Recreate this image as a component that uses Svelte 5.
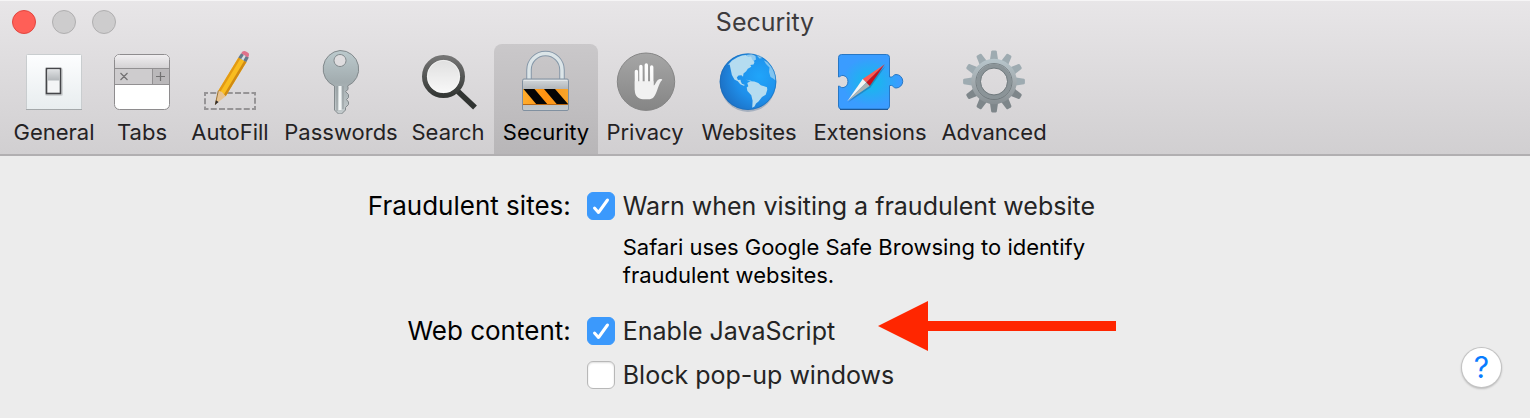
<script lang="ts">
  // Safari preferences window, Security pane.
  const panes = ['General', 'Tabs', 'AutoFill', 'Passwords', 'Search', 'Security', 'Privacy', 'Websites', 'Extensions', 'Advanced'];
  const teeth = Array.from({ length: 12 }, (_, i) => i * 30);

  let active = $state('Security');
  let warnFraud = $state(true);
  let enableJs = $state(true);
  let blockPopups = $state(false);
</script>

{#snippet icon(name: string)}
  <svg class="icon" viewBox="0 0 70 66" aria-hidden="true">
    {#if name === 'General'}
      <rect x="7.5" y="6.5" width="55" height="55" rx="1" fill="url(#plate)" stroke="#c9cdcf" />
      <path d="M7 61.5h56" stroke="#a4a8aa" />
      <rect x="26" y="20" width="18" height="28" rx="2" fill="#000" opacity=".12" />
      <rect x="27.5" y="20.5" width="14" height="25" fill="#f4f5f6" stroke="#45464a" stroke-width="1.6" />
      <rect x="28.5" y="21.5" width="12" height="11" fill="url(#rocker)" />
    {:else if name === 'Tabs'}
      <rect x="7.5" y="6.5" width="55" height="55" rx="5" fill="#fff" stroke="#8e8c8e" />
      <path d="M8 20V11.500q0-4.500 4.500-4.500h45q4.500 0 4.500 4.500V20z" fill="url(#tabhead)" />
      <path d="M8 20h54v17H8z" fill="#ceccce" />
      <path d="M45 20h17v17H45z" fill="#bab8ba" />
      <path d="M8 20.500h54M8 36.500h54M45.500 20.500v16" stroke="#929092" />
      <path d="M13.500 25l7 7M20.500 25l-7 7M49 28.500h9M53.500 24v9" stroke="#727172" stroke-width="1.200" />
    {:else if name === 'AutoFill'}
      <rect x="10" y="45" width="50" height="16" fill="none" stroke="#969496" stroke-width="2" stroke-dasharray="6 2.250" stroke-dashoffset="3" />
      <path d="M23.300 42.700L43.500 9.500L51.500 14L30.700 48.200z" fill="#f9bd20" />
      <path d="M23.300 42.700L43.500 9.500L45.500 10.600L25 44.500z" fill="#e39a13" />
      <path d="M28.700 47L49.300 12.700L51.500 14L30.700 48.200z" fill="#d08a12" />
      <path d="M23.300 42.700L20.300 56.500L30.700 48.200L27 44z" fill="#e7c391" />
      <path d="M23.300 42.700L20.300 56.500" stroke="#9b7335" />
      <path d="M20.900 52.200L20 57L23.600 54z" fill="#2f2b2b" />
      <path d="M43.300 9.500l2.900-4.300 7.600 4.300-2.400 4.600z" fill="#65798b" />
      <path d="M46.200 11l2.900-4.500 2 1.100-2.700 4.600z" fill="#d6dfe3" />
      <path d="M46.200 5.200l1.300-1.700q1.700-1.100 4.500.5t2 3.300l-.9 2.200z" fill="#df718b" />
    {:else if name === 'Passwords'}
      <path fill-rule="evenodd" fill="url(#steel)" stroke="#82898c" d="M34 2.500a18.500 18.500 0 0 1 7.500 35.500l.5 1v2.500l-2.500 2 3 3v3l-2 2 2 2.500v2.500l-3 3v2.500l-4 4h-3l-4-4V38A18.500 18.500 0 0 1 34 2.500zM34 6.500a6 6 0 1 0 .010 0z" />
      <path d="M32.500 38h3v24h-3z" fill="#f3f6f6" />
      <path d="M31 38v25M37 38v23" stroke="#92999c" />
    {:else if name === 'Search'}
      <path d="M44 42.500l18 17" stroke="#303331" stroke-width="5.500" />
      <circle cx="30.500" cy="28.500" r="19" fill="url(#lens)" stroke="url(#ring)" stroke-width="5" />
      <circle cx="30.500" cy="28.500" r="16.200" fill="none" stroke="#fff" opacity=".5" />
    {:else if name === 'Security'}
      <path d="M18 31V22a16.500 16.500 0 0 1 33 0V31" fill="none" stroke="#8597a8" stroke-width="5.500" />
      <path d="M18 31V22a16.500 16.500 0 0 1 33 0V31" fill="none" stroke="#dce5e8" stroke-width="3.500" />
      <rect x="11.500" y="31" width="46" height="31.500" rx="1.500" fill="url(#lock)" stroke="#8090a0" />
      <path d="M12 41h45v16H12z" fill="url(#orange)" />
      <path d="M12.500 41h11L37 57H26zM33 41h11l13 15v1H46.500z" fill="#050505" />
      <path d="M12 56.500h45" stroke="#b96914" />
      <path d="M13 32.500h43" stroke="#e3e7e9" />
    {:else if name === 'Privacy'}
      <circle cx="36" cy="33.700" r="28.700" fill="url(#disc)" stroke="#858585" />
      <g fill="none" stroke="url(#hand)" stroke-linecap="round">
        <path d="M26.400 23.500L26.500 42M30.900 18.500L31 38M36.300 17L36.400 38M41.700 19L41.800 38" stroke-width="3.400" />
      </g>
      <path d="M24.800 33.200h18.700v4.300c2.300-.6 2.500-5.500 5.800-6.300 1.500-.4 3.200.2 2.900.7-3.600 2.400-4.900 13.200-8.600 17.300-1.300 1.500-3.200 2-5.200 2h-5.500c-4.700 0-8.100-3.700-8.100-9z" fill="#f1f1f1" />
    {:else if name === 'Websites'}
      <ellipse cx="34" cy="36" rx="27.500" ry="28" fill="#315a86" opacity=".3" />
      <circle cx="34" cy="33.700" r="28.300" fill="url(#ocean)" />
      <g fill="#b5dcf0">
        <path d="M14 17l4-4.500 5.500-3.300 4.500-1.700 4-.5 2 2 3-.5 1 2.500 2.500 3-1 2.500-3.200.5 1 1.700-3.500 2-1.600 2.500-2.700 2.300-.5 3.200-1.500-1.500-3 .2-1.700 2 1.200 2.600 2.500-.3.4 2 1 2 3.100 1.200-1.200.8-3.500-1.500-2.500-3-3.400-1.800-2.500-4.300-1.200-5.600-1-5z" />
        <path d="M32.500 7l5-1 4 2 .5 3.500-2.500 1.500-2.500-2.500-3.500-.5zM42 6.500l5 1.500 1.500 2-3 .5z" opacity=".75" />
        <path d="M32 31.800l4 .5 2.500 1.300-3-.5z" opacity=".7" />
        <path d="M34.300 38.300l-1-3.300 3-1.700 4 .3 4 1.300 2.500 2.300 6.200 2 .3 2.500-1.600 5-3.700 2.200-3.500 4.500-2.500 2-1.500 3.100-2.300 1.300.4-7-1.300-5.500-3.900-4.200-.7-3.600z" />
        <path d="M50 12.500l3.500 1.500 5.500 7 2.200 6 .4 5.500-2.500-2-2.600-1.500-1.500-5 .5-4.500-3.500-3.500z" opacity=".65" />
      </g>
      <circle cx="34" cy="33.700" r="27.900" fill="none" stroke="#1766ad" opacity=".5" />
    {:else if name === 'Extensions'}
      <path d="M6.500 6.500h45a3 3 0 0 1 3 3V29h2c1.500 0 2-2.500 4.500-2.500a6.500 6.500 0 0 1 0 13.500c-2.500 0-3-2.500-4.500-2.500h-2V58a3 3 0 0 1-3 3h-45a3 3 0 0 1-3-3V38c1.500 0 2 1.700 4.500 1.700a6.300 6.300 0 0 0 0-12.300C5.500 27.400 5 29 3.500 29V9.500a3 3 0 0 1 3-3z" fill="url(#puzzle)" stroke="#2877c4" />
      <path d="M5 61.500h48" stroke="#1e5895" />
      <path d="M50.500 18L35.500 39.500 13 54.500z" fill="#174c75" opacity=".35" />
      <path d="M49.700 16.300L27.700 31l3.500 3.500z" fill="#ff5a52" />
      <path d="M49.700 16.300L31.200 34.500l3.500 3.500z" fill="#c9111a" />
      <path d="M12.300 53.300L27.700 31l3.500 3.500z" fill="#f5f5f4" />
      <path d="M12.300 53.300L31.200 34.500l3.500 3.500z" fill="#aeb3b3" />
    {:else}
      {#each teeth as angle (angle)}
        <path d="M30.800 13L32.200 3.500q.3-.9 1.300-.9h3q1 0 1.300.9L39.200 13z" fill={angle > 90 && angle < 270 ? '#7e868a' : '#9eabb1'} transform="rotate({angle} 35 33.500)" />
      {/each}
      <circle cx="35" cy="33.500" r="18" fill="none" stroke="url(#gear)" stroke-width="9.500" />
      <circle cx="35" cy="33.500" r="18" fill="none" stroke="#6c7478" opacity=".8" />
      <circle cx="35" cy="33.500" r="15.500" fill="none" stroke="#8b9498" stroke-width="4" />
      <circle cx="35" cy="33.500" r="13.500" fill="none" stroke="#717a7e" />
    {/if}
  </svg>
{/snippet}

{#snippet option(label: string, checked: boolean, toggle: () => void)}
  <label class="option">
    <span class="box">
      <input type="checkbox" {checked} onchange={toggle} />
      <svg viewBox="0 0 28 28" aria-hidden="true"><path d="M7.500 16l4 4.500L20.500 8" /></svg>
    </span>
    {label}
  </label>
{/snippet}

<!-- gradients shared by the toolbar icons -->
<svg class="defs" aria-hidden="true">
  <defs>
    <linearGradient id="plate" x2="0" y2="1"><stop stop-color="#fdfeff" /><stop offset="1" stop-color="#e8edef" /></linearGradient>
    <linearGradient id="rocker" x2="0" y2="1"><stop stop-color="#dfe1e3" /><stop offset="1" stop-color="#b3b7ba" /></linearGradient>
    <linearGradient id="tabhead" x2="0" y2="1"><stop stop-color="#f1eff1" /><stop offset="1" stop-color="#d4d2d4" /></linearGradient>
    <linearGradient id="steel" x2="0" y2="1"><stop stop-color="#bccacd" /><stop offset=".5" stop-color="#a2acaf" /><stop offset="1" stop-color="#c4cbcd" /></linearGradient>
    <linearGradient id="ring" x2="0" y2="1"><stop stop-color="#747474" /><stop offset="1" stop-color="#343735" /></linearGradient>
    <linearGradient id="lens" x2="0" y2="1"><stop stop-color="#dedede" /><stop offset="1" stop-color="#fafafa" /></linearGradient>
    <linearGradient id="lock" x2="0" y2="1"><stop stop-color="#d4d9dc" /><stop offset=".35" stop-color="#adb2b6" /><stop offset="1" stop-color="#c4c9cc" /></linearGradient>
    <linearGradient id="orange"><stop stop-color="#ffad2d" /><stop offset=".5" stop-color="#ff9210" /><stop offset="1" stop-color="#f7a52b" /></linearGradient>
    <linearGradient id="disc" x2="0" y2="1"><stop stop-color="#a6a6a6" /><stop offset="1" stop-color="#858585" /></linearGradient>
    <linearGradient id="hand" gradientUnits="userSpaceOnUse" x1="0" y1="15" x2="0" y2="51"><stop stop-color="#fff" /><stop offset="1" stop-color="#ededed" /></linearGradient>
    <radialGradient id="ocean" cx=".7" cy=".4" r=".75"><stop stop-color="#20a5fa" /><stop offset=".55" stop-color="#1f8fea" /><stop offset="1" stop-color="#1c6ec2" /></radialGradient>
    <radialGradient id="puzzle"><stop stop-color="#12bde9" /><stop offset=".9" stop-color="#3a9cff" /></radialGradient>
    <linearGradient id="gear" gradientUnits="userSpaceOnUse" x1="0" y1="2" x2="0" y2="65"><stop stop-color="#bfd0d7" /><stop offset=".5" stop-color="#a3abaf" /><stop offset="1" stop-color="#7c8387" /></linearGradient>
  </defs>
</svg>

<div class="window">
  <header>
    <div class="titlebar">
      <div class="lights">
        <button class="light close" type="button" aria-label="Close"></button>
        <button class="light" type="button" aria-label="Minimize" disabled></button>
        <button class="light" type="button" aria-label="Zoom" disabled></button>
      </div>
      <h1>{active}</h1>
    </div>
    <nav>
      {#each panes as pane (pane)}
        <button class="pane" class:active={pane === active} type="button" onclick={() => (active = pane)}>
          {@render icon(pane)}
          <span>{pane}</span>
        </button>
      {/each}
    </nav>
  </header>

  <main>
    <section>
      <h2>Fraudulent sites:</h2>
      <div class="options">
        {@render option('Warn when visiting a fraudulent website', warnFraud, () => (warnFraud = !warnFraud))}
        <p>Safari uses Google Safe Browsing to identify fraudulent websites.</p>
      </div>
    </section>
    <section>
      <h2>Web content:</h2>
      <div class="options">
        {@render option('Enable JavaScript', enableJs, () => (enableJs = !enableJs))}
        {@render option('Block pop-up windows', blockPopups, () => (blockPopups = !blockPopups))}
        <svg class="arrow" viewBox="0 0 238 50" aria-hidden="true"><path d="M0 25L50 0v20h188v10H50v20z" /></svg>
      </div>
    </section>
    <button class="help" type="button" aria-label="Help">?</button>
  </main>
</div>

<style>
  :global(body) { margin: 0; background: #ececec; }
  .defs { position: absolute; width: 0; height: 0; }

  .window {
    font-family: Inter, "Liberation Sans", sans-serif;
    color: #000;
  }
  button { font: inherit; border: 0; padding: 0; }
  h1, h2, p { margin: 0; font-weight: 400; }

  header {
    background: linear-gradient(#e8e6e8, #d1cfd1);
    border-bottom: 2px solid #b1afb1;
    box-shadow: inset 0 1px #f6f5f6;
  }
  .titlebar {
    display: grid; grid-template-columns: 1fr auto 1fr; align-items: center;
    height: 44px; padding: 0 12px;
  }
  .lights { display: flex; gap: 16px; }
  .light {
    box-sizing: border-box; width: 24px; height: 24px; border-radius: 50%;
    background: #cdcccd; border: 1px solid #b0afb0;
  }
  .light.close { background: #ff5f57; border-color: #e2463f; }
  h1 { font-size: 25px; line-height: 32px; color: #3d3b3d; }

  nav {
    display: grid;
    grid-template-columns: 100px 76px 100px 122px 92px 104px 94px 114px 128px 120px;
    padding-left: 4px;
  }
  .pane {
    display: flex; flex-direction: column; align-items: center;
    height: 110px; padding-top: 4px; box-sizing: border-box;
    background: none; border-radius: 8px 8px 0 0;
    font-size: 22px; line-height: 28px; color: #242224; white-space: nowrap;
  }
  .pane.active { background: linear-gradient(#cac8ca, #b8b6b8); color: #000; }
  .pane span { margin-top: 4px; }
  .icon { flex: none; width: 70px; height: 66px; }

  main {
    position: relative;
    display: flex; flex-direction: column; gap: 26px;
    padding: 34px 28px 26px 0;
  }
  section { display: grid; grid-template-columns: 38% 1fr; column-gap: 16px; }
  h2 { text-align: right; font-size: 26px; line-height: 32px; }
  .options { position: relative; display: flex; flex-direction: column; align-items: flex-start; gap: 12px; }
  .option {
    display: flex; align-items: center; gap: 8px;
    font-size: 25px; line-height: 32px; color: #242424;
  }
  .box { display: grid; width: 28px; height: 28px; }
  .box input, .box svg { grid-area: 1 / 1; }
  .box input {
    appearance: none; box-sizing: border-box; width: 28px; height: 28px; margin: 0;
    background: #fff; border: 1px solid #b8b8b8; border-radius: 6px;
    box-shadow: inset 0 1px 2px #0002;
  }
  .box input:checked { background: #3b99fc; border-color: #3b99fc; box-shadow: none; }
  .box svg {
    display: none; pointer-events: none;
    fill: none; stroke: #fff; stroke-width: 3; stroke-linecap: round; stroke-linejoin: round;
  }
  .box input:checked + svg { display: block; }
  p { max-width: 480px; padding-left: 36px; margin-top: -1px; font-size: 22px; line-height: 28px; }

  .arrow {
    position: absolute; left: 291px; top: -14px; width: 238px; height: 50px;
    fill: #ff2600; pointer-events: none;
  }
  .help {
    position: absolute; right: 29px; bottom: 30px;
    width: 39px; height: 39px; border-radius: 50%;
    background: #fff; color: #087cff;
    font-size: 30px; line-height: 39px; text-align: center;
    box-shadow: 0 0 0 1px #c3c3c3, 0 1px 2px 1px #0003;
  }
</style>
